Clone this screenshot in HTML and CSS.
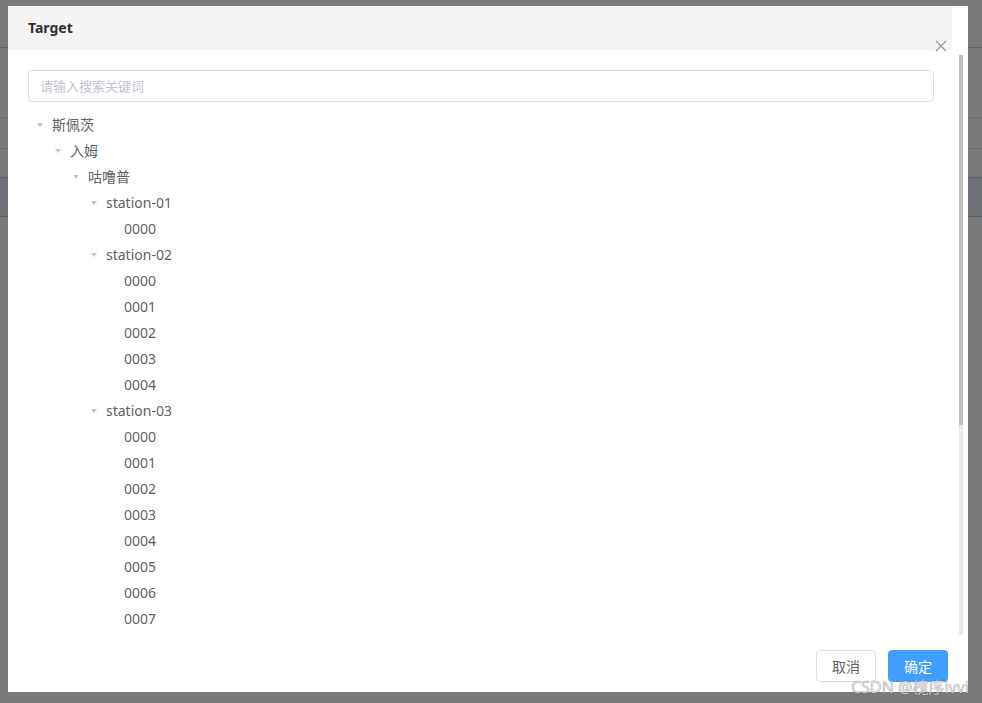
FILE: index.html
```html
<!DOCTYPE html>
<html lang="zh">
<head>
<meta charset="utf-8">
<title>Target</title>
<link rel="stylesheet" href="styles.css">
</head>
<body>
<div class="page">
  <div class="page-top"></div>
  <div class="page-content">
    <div class="tbl-row gap1"></div>
    <div class="tbl-row gap2"></div>
    <div class="tbl-row sel"></div>
  </div>
</div>
<div class="mask">
  <div class="dialog">
    <div class="dlg-header"><span class="dlg-title">Target</span></div>
    <button class="dlg-close" aria-label="close">
      <svg width="12" height="12" viewBox="0 0 12 12"><path d="M1 1L11 11M11 1L1 11" stroke="#909399" stroke-width="1.1" fill="none"/></svg>
    </button>
    <div class="dlg-body">
      <input class="search" type="text" placeholder="请输入搜索关键词">
      <div class="tree">
        <div class="node l1"><span class="caret"></span><span>斯佩茨</span></div>
        <div class="node l2"><span class="caret"></span><span>入姆</span></div>
        <div class="node l3"><span class="caret"></span><span>咕噜普</span></div>
        <div class="node l4"><span class="caret"></span><span>station-01</span></div>
        <div class="node l5"><span class="leaf"></span><span>0000</span></div>
        <div class="node l4"><span class="caret"></span><span>station-02</span></div>
        <div class="node l5"><span class="leaf"></span><span>0000</span></div>
        <div class="node l5"><span class="leaf"></span><span>0001</span></div>
        <div class="node l5"><span class="leaf"></span><span>0002</span></div>
        <div class="node l5"><span class="leaf"></span><span>0003</span></div>
        <div class="node l5"><span class="leaf"></span><span>0004</span></div>
        <div class="node l4"><span class="caret"></span><span>station-03</span></div>
        <div class="node l5"><span class="leaf"></span><span>0000</span></div>
        <div class="node l5"><span class="leaf"></span><span>0001</span></div>
        <div class="node l5"><span class="leaf"></span><span>0002</span></div>
        <div class="node l5"><span class="leaf"></span><span>0003</span></div>
        <div class="node l5"><span class="leaf"></span><span>0004</span></div>
        <div class="node l5"><span class="leaf"></span><span>0005</span></div>
        <div class="node l5"><span class="leaf"></span><span>0006</span></div>
        <div class="node l5"><span class="leaf"></span><span>0007</span></div>
        <div class="node l5"><span class="leaf"></span><span>0008</span></div>
      </div>
    </div>
    <div class="scrollbar"><div class="scroll-thumb"></div></div>
    <div class="dlg-footer">
      <button class="btn">取消</button>
      <button class="btn primary">确定</button>
    </div>
  </div>
  <div class="watermark">CSDN @槐序ivvi</div>
</div>
</body>
</html>
```

FILE: styles.css
```css
* { box-sizing: border-box; }
html, body { margin: 0; padding: 0; }
body {
  width: 982px;
  height: 703px;
  overflow: hidden;
  background: #fff;
  font-family: "Noto Sans", "Noto Sans CJK SC", sans-serif;
}
.page { height: 703px; background: #fff; }
.page-top { height: 48px; border-bottom: 1px solid #d8d8d8; }
.page-content { padding-top: 69px; }
.tbl-row { height: 31px; border-top: 1px solid #e4e4e4; }
.tbl-row.gap2 { height: 29px; }
.tbl-row.sel { height: 40px; background: #e6eef8; border-top: 1px solid #b8cbe6; border-bottom: 1px solid #b8cbe6; }

.mask {
  position: fixed;
  inset: 0;
  background: rgba(0, 0, 0, 0.52);
  padding: 6px 14px 11px 8px;
}
.dialog {
  position: relative;
  width: 960px;
  height: 686px;
  background: #fff;
  display: flex;
  flex-direction: column;
}
.dlg-header {
  height: 44px;
  width: 944px;
  background: #f4f4f4;
  padding: 0 20px 1px;
  line-height: 43px;
  flex: none;
}
.dlg-title {
  font-size: 14px;
  font-weight: 700;
  color: #303133;
}
.dlg-close {
  position: absolute;
  top: 34px;
  right: 21px;
  width: 12px;
  height: 12px;
  padding: 0;
  border: 0;
  background: none;
  display: block;
}
.dlg-close svg { display: block; }
.dlg-body {
  margin-top: 5px;
  margin-right: 5px;
  height: 585px;
  flex: none;
  overflow: hidden;
  padding: 15px 29px 0 20px;
}
.scrollbar {
  position: absolute;
  left: 951px;
  top: 49px;
  width: 4px;
  height: 580px;
  background: #ebebeb;
}
.scroll-thumb {
  height: 370px;
  background: #c1c1c1;
}
.search {
  display: block;
  width: 100%;
  height: 32px;
  border: 1px solid #dcdfe6;
  border-radius: 4px;
  padding: 0 11px;
  font-family: "Noto Sans", "Noto Sans CJK SC", sans-serif;
  font-size: 13px;
  color: #606266;
  outline: none;
}
.search::placeholder { color: #c0c4cc; }
.tree { margin-top: 9px; }
.node {
  height: 26px;
  display: flex;
  align-items: center;
  font-size: 14px;
  color: #606266;
}
.node.l2 { padding-left: 18px; }
.node.l3 { padding-left: 36px; }
.node.l4 { padding-left: 54px; }
.node.l5 { padding-left: 72px; }
.caret, .leaf {
  width: 24px;
  height: 26px;
  flex: none;
  position: relative;
}
.caret::after {
  content: "";
  position: absolute;
  left: 9px;
  top: 12px;
  border-left: 3px solid transparent;
  border-right: 3px solid transparent;
  border-top: 4px solid #c0c4cc;
}
.dlg-footer {
  flex: none;
  display: flex;
  justify-content: flex-end;
  gap: 12px;
  padding: 10px 20px 10px;
}
.btn {
  height: 32px;
  padding: 0 15px;
  border: 1px solid #dcdfe6;
  border-radius: 4px;
  background: #fff;
  color: #606266;
  font-size: 14px;
  font-family: "Noto Sans CJK SC", sans-serif;
  line-height: 29px;
}
.btn.primary {
  background: #409eff;
  border-color: #409eff;
  color: #fff;
}
.watermark {
  position: absolute;
  right: 13px;
  bottom: 7px;
  font-family: "Noto Sans", "Noto Sans CJK SC", sans-serif;
  font-size: 16px;
  line-height: 18px;
  color: rgba(255, 255, 255, 0.75);
  text-shadow: 0 0 1px rgba(0, 0, 0, 0.7);
}
```
